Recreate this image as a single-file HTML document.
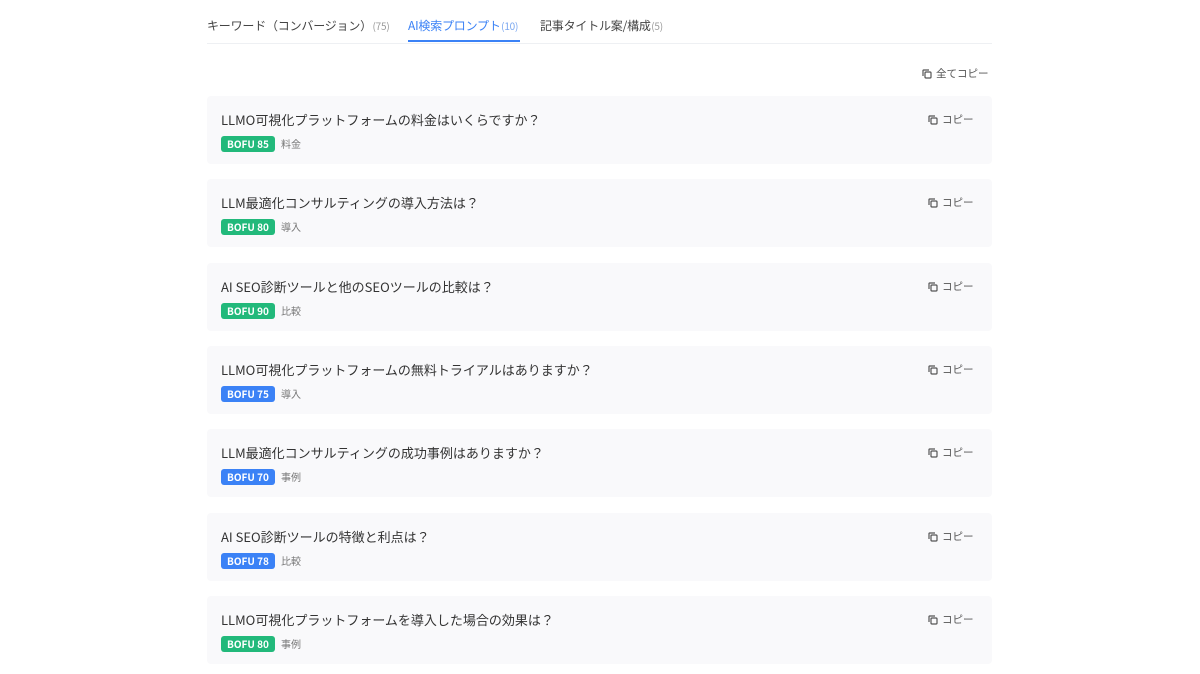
<!DOCTYPE html>
<html><head><meta charset="utf-8"><style>
*{margin:0;padding:0;box-sizing:border-box}
body{width:1200px;height:674px;background:#fff;font-family:"Noto Sans CJK JP","Liberation Sans",sans-serif;color:#333;overflow:hidden;position:relative}
.tabs{position:absolute;left:207px;top:0;width:785px;height:44px;border-bottom:1px solid #eef0f3}
.tab{position:absolute;top:17px;font-size:12px;color:#444;white-space:nowrap;letter-spacing:-0.2px}
.tab small{font-size:10px;color:#999;margin-left:-2px}
.tab.a{color:#3b82f6}
.tab.a small{color:#7aa7f0}
.ul{position:absolute;left:201px;top:40px;width:112px;height:2px;background:#3b82f6}
.allcopy{position:absolute;left:922px;top:66px;font-size:10.5px;color:#555;display:flex;align-items:center;gap:4px}
.card{position:absolute;left:207px;width:785px;height:68px;background:#f9f9fb;border-radius:4px}
.t{position:absolute;left:14px;top:14px;font-size:13px;color:#333;white-space:nowrap}
.b{position:absolute;left:14px;top:40px;height:16px;border-radius:3px;color:#fff;font-size:10px;font-weight:bold;line-height:16px;width:54px;text-align:center;white-space:nowrap}
.g{background:#22b97b}.bl{background:#3b82f6}
.c{position:absolute;left:74px;top:40px;font-size:10px;color:#777}
.cp{position:absolute;left:721px;top:16px;font-size:10.5px;color:#555;display:flex;align-items:center;gap:4px}
svg{display:block}
</style></head><body>
<div class="tabs">
<div class="tab" style="left:0">キーワード（コンバージョン） <small>(75)</small></div>
<div class="tab a" style="left:201px">AI検索プロンプト <small>(10)</small></div>
<div class="tab" style="left:333px">記事タイトル案/構成 <small>(5)</small></div>
<div class="ul"></div>
</div>
<div class="allcopy"><svg width="10" height="10" viewBox="0 0 10 10"><rect x="3" y="3" width="6" height="6" rx="1" fill="none" stroke="#555" stroke-width="1.2"/><path d="M1 7V1.5A.5.5 0 0 1 1.5 1H7" fill="none" stroke="#555" stroke-width="1.2"/></svg>全てコピー</div>

<div class="card" style="top:96px"><div class="t">LLMO可視化プラットフォームの料金はいくらですか？</div><div class="b g">BOFU 85</div><div class="c">料金</div><div class="cp"><svg width="10" height="10" viewBox="0 0 10 10"><rect x="3" y="3" width="6" height="6" rx="1" fill="none" stroke="#555" stroke-width="1.2"/><path d="M1 7V1.5A.5.5 0 0 1 1.5 1H7" fill="none" stroke="#555" stroke-width="1.2"/></svg>コピー</div></div>
<div class="card" style="top:179px"><div class="t">LLM最適化コンサルティングの導入方法は？</div><div class="b g">BOFU 80</div><div class="c">導入</div><div class="cp"><svg width="10" height="10" viewBox="0 0 10 10"><rect x="3" y="3" width="6" height="6" rx="1" fill="none" stroke="#555" stroke-width="1.2"/><path d="M1 7V1.5A.5.5 0 0 1 1.5 1H7" fill="none" stroke="#555" stroke-width="1.2"/></svg>コピー</div></div>
<div class="card" style="top:263px"><div class="t">AI SEO診断ツールと他のSEOツールの比較は？</div><div class="b g">BOFU 90</div><div class="c">比較</div><div class="cp"><svg width="10" height="10" viewBox="0 0 10 10"><rect x="3" y="3" width="6" height="6" rx="1" fill="none" stroke="#555" stroke-width="1.2"/><path d="M1 7V1.5A.5.5 0 0 1 1.5 1H7" fill="none" stroke="#555" stroke-width="1.2"/></svg>コピー</div></div>
<div class="card" style="top:346px"><div class="t">LLMO可視化プラットフォームの無料トライアルはありますか？</div><div class="b bl">BOFU 75</div><div class="c">導入</div><div class="cp"><svg width="10" height="10" viewBox="0 0 10 10"><rect x="3" y="3" width="6" height="6" rx="1" fill="none" stroke="#555" stroke-width="1.2"/><path d="M1 7V1.5A.5.5 0 0 1 1.5 1H7" fill="none" stroke="#555" stroke-width="1.2"/></svg>コピー</div></div>
<div class="card" style="top:429px"><div class="t">LLM最適化コンサルティングの成功事例はありますか？</div><div class="b bl">BOFU 70</div><div class="c">事例</div><div class="cp"><svg width="10" height="10" viewBox="0 0 10 10"><rect x="3" y="3" width="6" height="6" rx="1" fill="none" stroke="#555" stroke-width="1.2"/><path d="M1 7V1.5A.5.5 0 0 1 1.5 1H7" fill="none" stroke="#555" stroke-width="1.2"/></svg>コピー</div></div>
<div class="card" style="top:513px"><div class="t">AI SEO診断ツールの特徴と利点は？</div><div class="b bl">BOFU 78</div><div class="c">比較</div><div class="cp"><svg width="10" height="10" viewBox="0 0 10 10"><rect x="3" y="3" width="6" height="6" rx="1" fill="none" stroke="#555" stroke-width="1.2"/><path d="M1 7V1.5A.5.5 0 0 1 1.5 1H7" fill="none" stroke="#555" stroke-width="1.2"/></svg>コピー</div></div>
<div class="card" style="top:596px"><div class="t">LLMO可視化プラットフォームを導入した場合の効果は？</div><div class="b g">BOFU 80</div><div class="c">事例</div><div class="cp"><svg width="10" height="10" viewBox="0 0 10 10"><rect x="3" y="3" width="6" height="6" rx="1" fill="none" stroke="#555" stroke-width="1.2"/><path d="M1 7V1.5A.5.5 0 0 1 1.5 1H7" fill="none" stroke="#555" stroke-width="1.2"/></svg>コピー</div></div>
</body></html>
